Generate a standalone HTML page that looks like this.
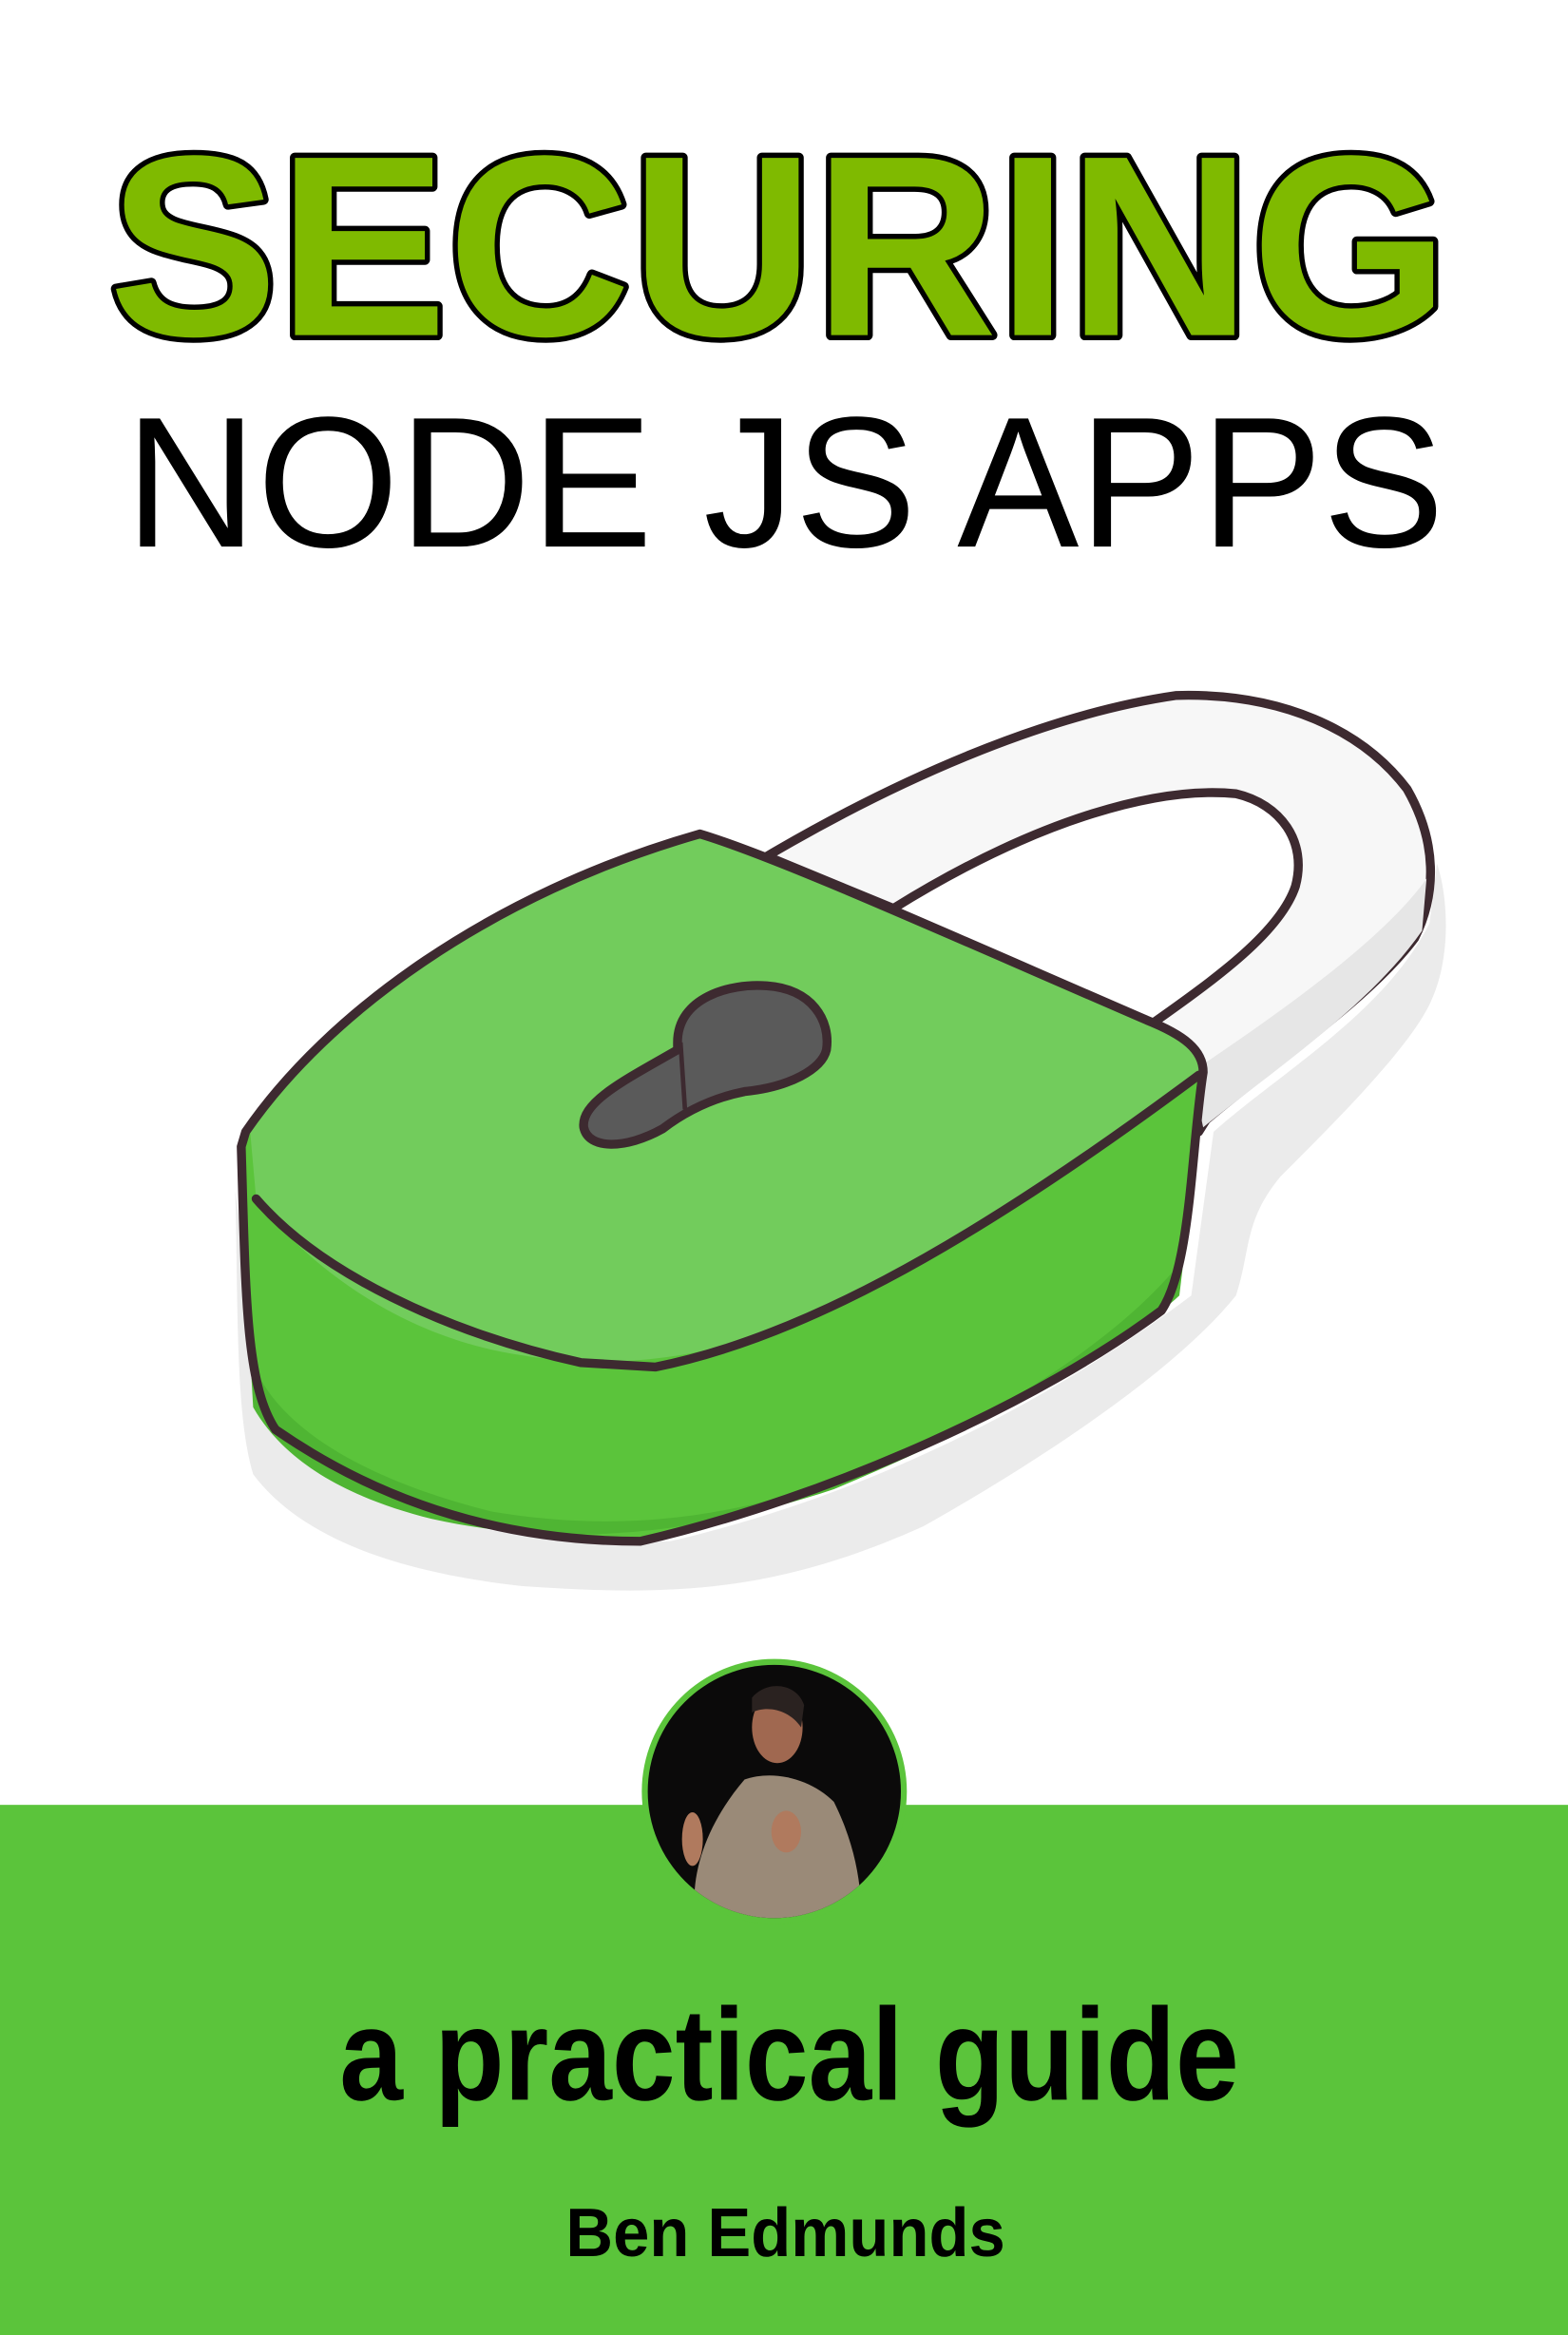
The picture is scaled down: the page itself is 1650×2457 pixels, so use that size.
<!DOCTYPE html>
<html><head><meta charset="utf-8">
<style>
html,body{margin:0;padding:0;background:#fff;}
svg{display:block;}
</style></head>
<body>
<svg width="1650" height="2457" viewBox="0 0 1053 1568" preserveAspectRatio="none" xmlns="http://www.w3.org/2000/svg">
<rect x="0" y="0" width="1053" height="1568" fill="#ffffff"/>
<text x="73" y="225" textLength="900" lengthAdjust="spacingAndGlyphs" font-family="Liberation Sans, Arial, sans-serif" font-weight="bold" font-size="173" fill="#7fba00" stroke="#000" stroke-width="7" paint-order="stroke" stroke-linejoin="round">SECURING</text>
<text x="84" y="367" textLength="886" lengthAdjust="spacingAndGlyphs" font-family="Liberation Sans, Arial, sans-serif" font-size="125" fill="#000">NODE JS APPS</text>

<path d="M158 800 C160 880 158 950 170 990 C200 1030 260 1055 350 1065 C450 1072 520 1070 620 1025 C700 980 790 920 830 870 C840 840 835 820 860 790 C900 750 950 700 962 670 C975 640 972 600 965 580 L960 620 C930 680 860 720 815 760 L800 870 C720 930 600 1000 450 1035 C330 1040 230 1010 180 960 Z" fill="#ebebeb"/>

<path d="M515 575 C600 525 700 480 790 467 C860 465 915 490 945 530 C965 565 965 600 950 630 C920 670 860 710 810 752 L805 760 L800 760 L770 690 C820 655 860 625 870 595 C878 565 860 540 830 533 C780 528 700 548 600 610 Z" fill="#f7f7f7" stroke="#3d2a30" stroke-width="6" stroke-linejoin="round"/>
<path d="M800 720 C860 680 930 630 958 590 L955 625 C920 675 860 715 808 757 Z" fill="#e6e6e6"/>

<path d="M165 760 C220 680 330 600 470 560 C520 575 620 620 770 685 C795 695 808 705 808 720 C800 770 800 850 780 880 C700 940 560 1005 430 1035 C330 1035 250 1005 185 960 C165 930 165 870 162 770 Z" fill="#5bc43b"/>
<path d="M168 910 C180 950 230 990 330 1015 C420 1030 500 1020 600 980 C690 940 760 890 795 845 L792 870 C760 900 680 950 560 1000 C470 1030 380 1040 290 1020 C230 1005 190 980 170 945 Z" fill="#4fb533"/>
<path d="M168 760 C220 680 330 600 470 560 C520 575 620 620 770 685 C795 695 808 705 805 722 C700 800 600 860 500 900 C450 915 400 918 350 910 C280 900 215 860 172 805 Z" fill="#72cc5c"/>
<path d="M172 805 C215 855 300 895 390 915 L440 918 C530 900 640 845 805 722" fill="none" stroke="#3d2a30" stroke-width="6" stroke-linecap="round" stroke-linejoin="round"/>
<path d="M165 760 C220 680 330 600 470 560 C520 575 620 620 770 685 C795 695 808 705 808 720 C800 770 800 850 780 880 C700 940 560 1005 430 1035 C330 1035 250 1005 185 960 C165 930 165 870 162 770 Z" fill="none" stroke="#3d2a30" stroke-width="6" stroke-linejoin="round"/>

<path d="M455 700 C455 670 490 660 515 662 C545 664 558 685 555 705 C552 718 530 730 500 733 C480 737 462 745 445 758 C420 772 395 772 392 757 C390 740 420 725 455 705 Z" fill="#5a5a5a" stroke="#3d2a30" stroke-width="6" stroke-linejoin="round"/>
<path d="M457 700 L460 745" stroke="#3d2a30" stroke-width="3"/>

<rect x="0" y="1212" width="1053" height="356" fill="#5bc43b"/>

<circle cx="520" cy="1203" r="89" fill="#5bc43b"/>
<circle cx="520" cy="1203" r="85" fill="#0b0a0a"/>
<clipPath id="av"><circle cx="520" cy="1203" r="85"/></clipPath>
<g clip-path="url(#av)">
<path d="M500 1195 C520 1188 545 1195 560 1210 C575 1240 580 1270 578 1300 L470 1300 C460 1270 470 1230 500 1195 Z" fill="#9a8a78"/>
<ellipse cx="522" cy="1160" rx="17" ry="24" fill="#a06850"/>
<path d="M505 1140 C515 1128 535 1130 540 1145 L538 1160 C530 1148 515 1145 505 1150 Z" fill="#2a2220"/>
<ellipse cx="465" cy="1235" rx="7" ry="18" fill="#b07a5e"/>
<ellipse cx="528" cy="1230" rx="10" ry="14" fill="#b07a5e"/>
</g>

<text x="228" y="1410" textLength="604" lengthAdjust="spacingAndGlyphs" font-family="Liberation Sans, Arial, sans-serif" font-weight="bold" font-size="88" fill="#000">a practical guide</text>
<text x="380" y="1515" textLength="295" lengthAdjust="spacingAndGlyphs" font-family="Liberation Sans, Arial, sans-serif" font-weight="bold" font-size="46" fill="#000">Ben Edmunds</text>
</svg>
</body></html>
